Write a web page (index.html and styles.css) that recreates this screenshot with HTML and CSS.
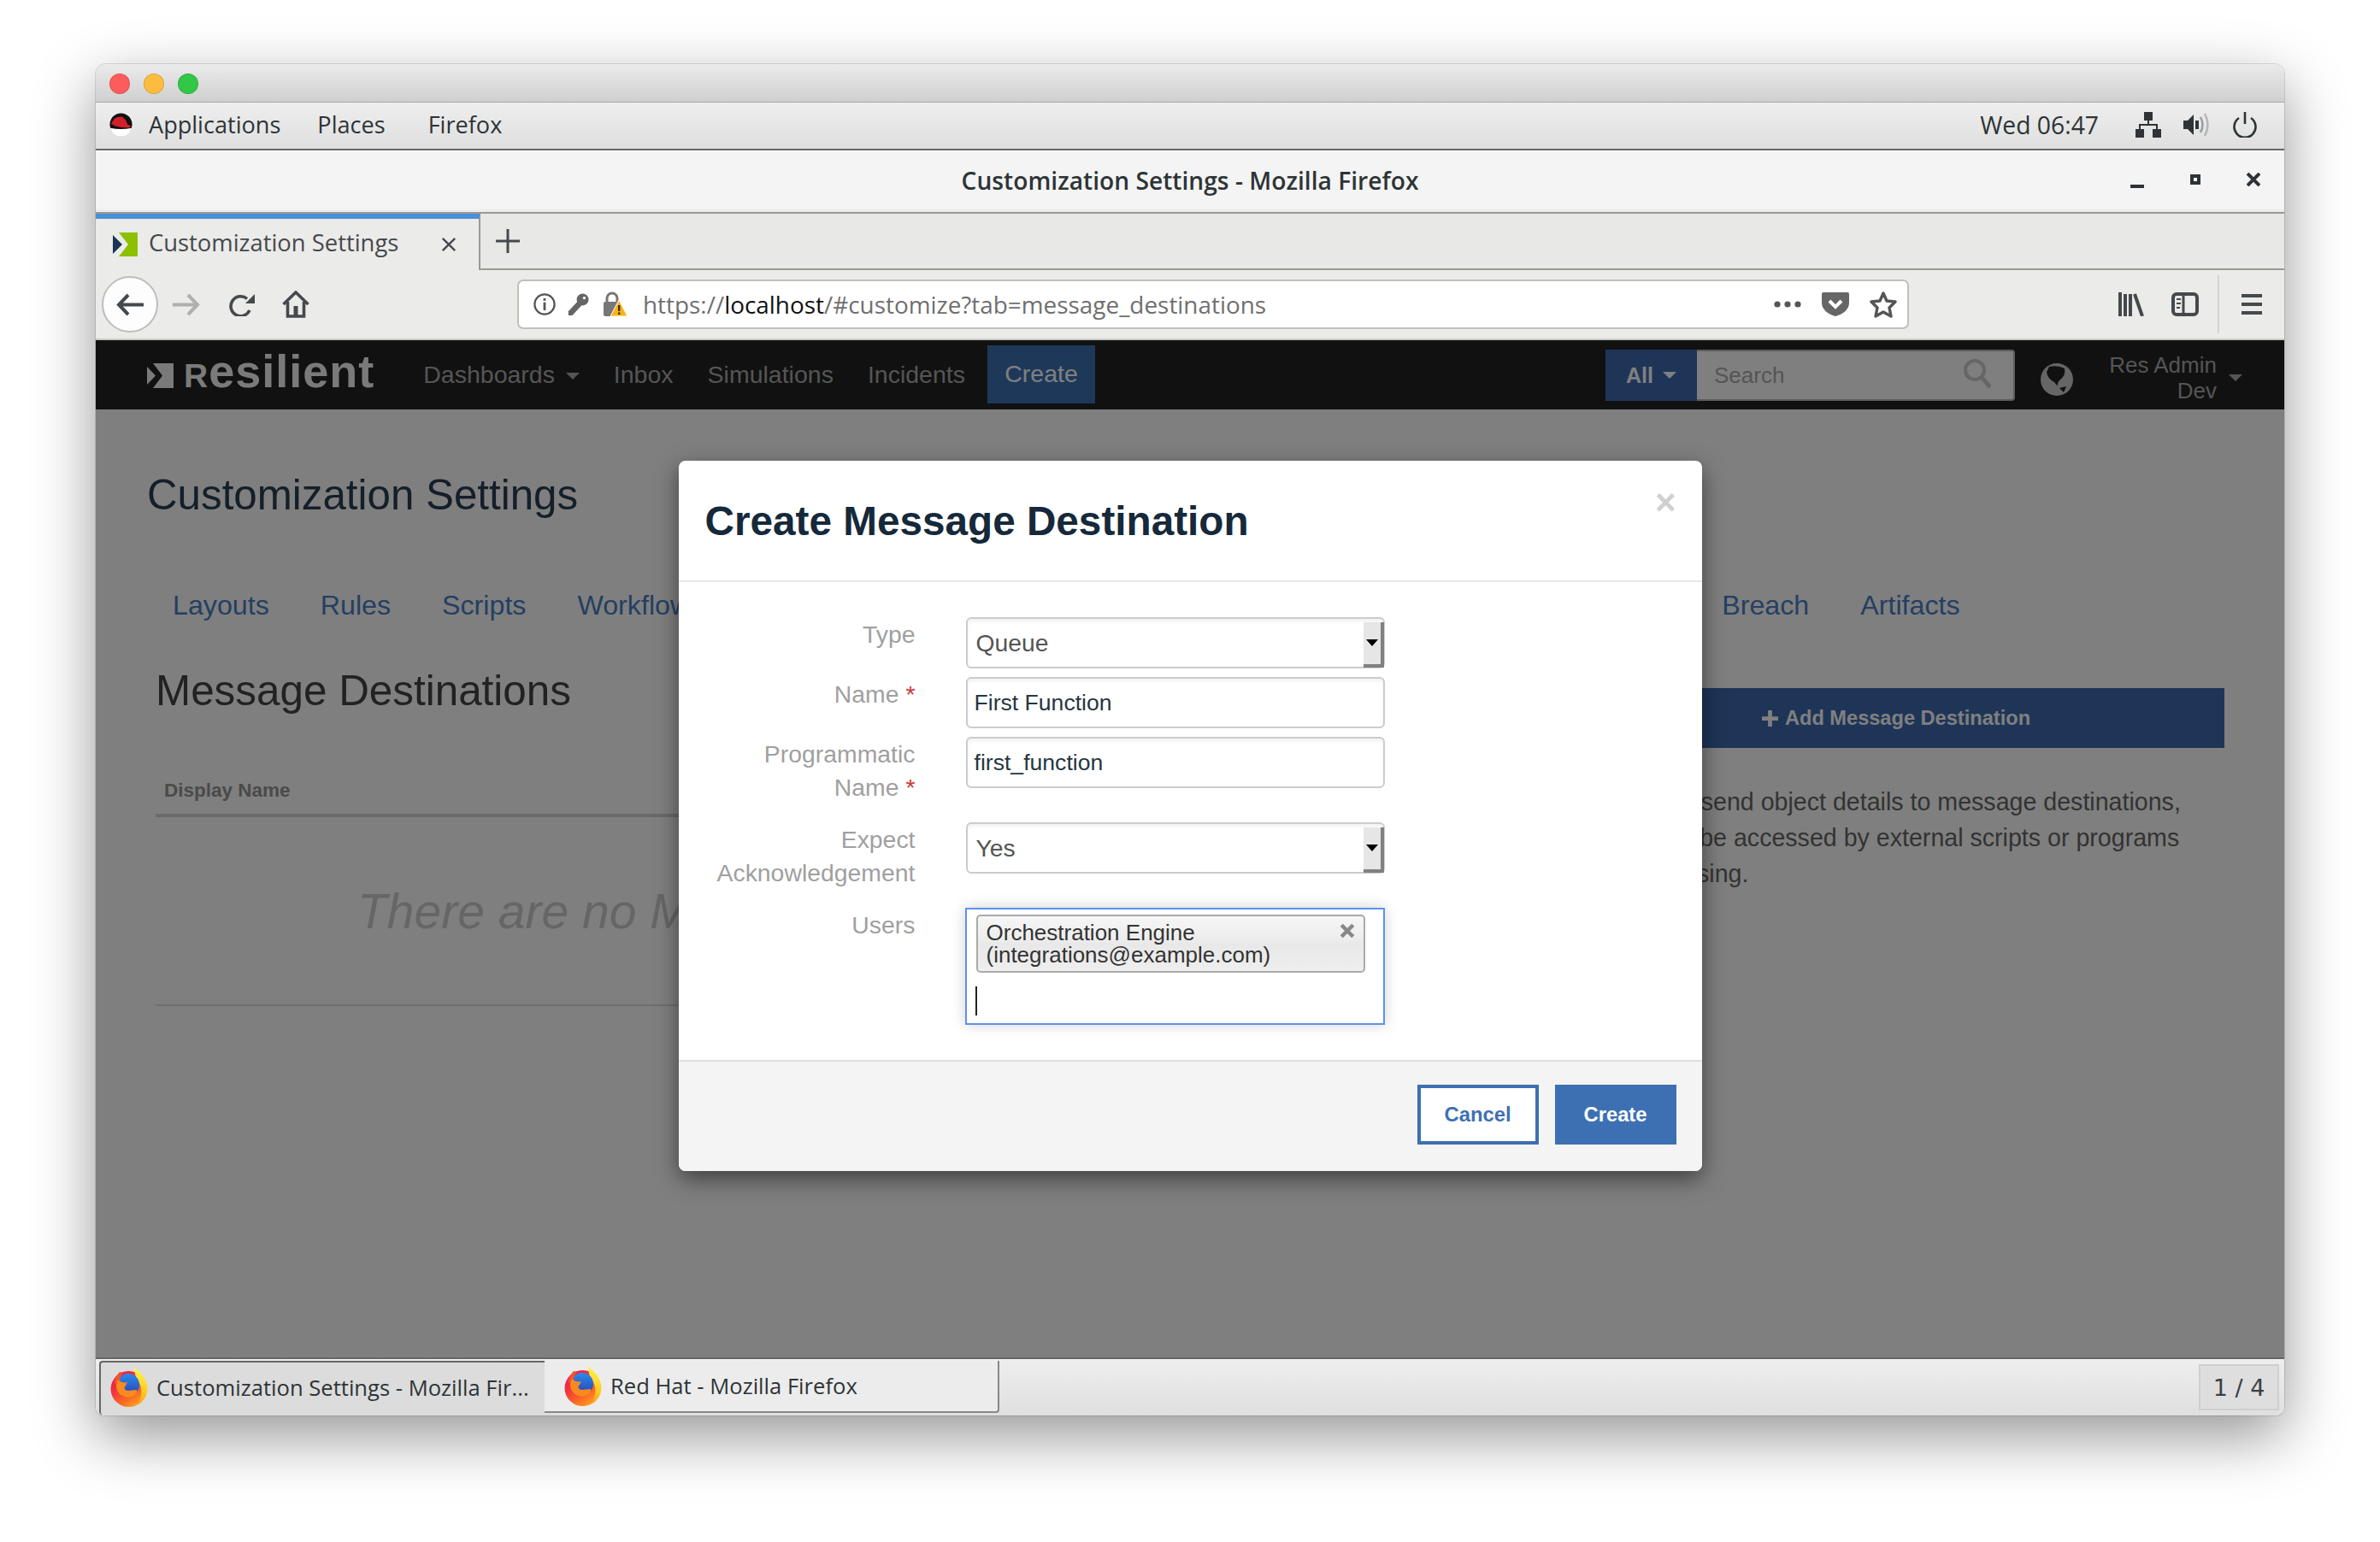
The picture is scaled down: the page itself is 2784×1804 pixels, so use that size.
FILE: index.html
```html
<!DOCTYPE html>
<html lang="en">
<head>
<meta charset="utf-8">
<title>Customization Settings</title>
<link rel="stylesheet" href="styles.css">
</head>
<body>
<div class="window">
  <div class="macbar">
    <span class="light red"></span><span class="light amber"></span><span class="light green"></span>
  </div>
  <div class="gnomebar">
    <svg class="redhat" viewBox="0 0 28 28"><circle cx="14" cy="14" r="13.5" fill="#111"/><path d="M1 18.5 A13.5 13.5 0 0 0 27 18.5 Q14 21 1 18.5 Z" fill="#fff"/><path d="M2 13 L6 7 Q11 4 16 5 L20 9 L22 14 L26 16 Q25 19 20 18 Q8 18 2 13 Z" fill="#d0202a"/></svg>
    <span class="gmenu first">Applications</span>
    <span class="gmenu places">Places</span>
    <span class="gmenu firefox">Firefox</span>
    <span class="clock">Wed 06:47</span>
    <svg class="tray net" viewBox="0 0 30 30"><rect x="10" y="0" width="10" height="10" fill="#2e3436"/><rect x="0" y="20" width="10" height="10" fill="#2e3436"/><rect x="20" y="20" width="10" height="10" fill="#2e3436"/><path d="M15 10V15M5 20V15H25V20" fill="none" stroke="#2e3436" stroke-width="2"/></svg>
    <svg class="tray vol" viewBox="0 0 30 28"><path d="M0 9H5L12 2V26L5 19H0Z" fill="#2e3436"/><rect x="14" y="9" width="4" height="10" fill="#2e3436"/><path d="M20 5Q25 14 20 23" fill="none" stroke="#9a9c9c" stroke-width="2.5"/><path d="M25 1Q32 14 25 27" fill="none" stroke="#b4b6b6" stroke-width="2.5"/></svg>
    <svg class="tray pow" viewBox="0 0 30 30"><path d="M8 7A12.5 12.5 0 1 0 22 7" fill="none" stroke="#2e3436" stroke-width="2.6"/><path d="M15 0V14" stroke="#2e3436" stroke-width="2.6"/></svg>
  </div>
  <div class="titlebar">
    <span class="wintitle">Customization Settings - Mozilla Firefox</span>
    <div class="wincontrols">
      <span class="wmin"></span>
      <span class="wmax"></span>
      <svg class="wclose" viewBox="0 0 16 16"><path d="M1 1L15 15M15 1L1 15" stroke="#2e3436" stroke-width="4"/></svg>
    </div>
  </div>
  <div class="tabbar">
    <div class="tab">
      <svg class="favicon" viewBox="0 0 29 28"><path d="M0 3L11 14L0 25Z" fill="#1c3553"/><path d="M7 0H29V28H7L18 14Z" fill="#8cc000"/></svg>
      <span class="tabtext">Customization Settings</span>
      <svg class="tabclose" viewBox="0 0 20 20"><path d="M2 2L18 18M18 2L2 18" stroke="#45494c" stroke-width="2.6"/></svg>
    </div>
    <svg class="newtab" viewBox="0 0 28 28"><path d="M14 0V28M0 14H28" stroke="#45494c" stroke-width="3"/></svg>
  </div>
  <div class="navbar">
    <span class="backbtn"><svg class="arrow" viewBox="0 0 32 27"><path d="M14 2L3 13.5L14 25M3 13.5H32" fill="none" stroke="#45494c" stroke-width="4"/></svg></span>
    <svg class="arrow fwd" viewBox="0 0 32 27"><path d="M18 2L29 13.5L18 25M29 13.5H0" fill="none" stroke="#b0b0b0" stroke-width="4"/></svg>
    <svg class="reload" viewBox="0 0 30 27"><path d="M21 6.5A11.5 11.5 0 1 0 24 20" fill="none" stroke="#45494c" stroke-width="3.6"/><path d="M30 1V12H19Z" fill="#45494c"/></svg>
    <svg class="home" viewBox="0 0 32 32"><path d="M1.5 16L16 2L30.5 16" fill="none" stroke="#45494c" stroke-width="3.6"/><path d="M6.5 13V30H25.5V13" fill="none" stroke="#45494c" stroke-width="3.6"/><rect x="13.5" y="18" width="5" height="12" fill="#45494c"/></svg>
    <div class="urlbar">
      <svg class="uicon info" viewBox="0 0 28 28"><circle cx="14" cy="14" r="12.5" fill="none" stroke="#555" stroke-width="2.4"/><rect x="12.5" y="6.5" width="3" height="3" fill="#555"/><rect x="12.5" y="11.5" width="3" height="10" fill="#555"/></svg>
      <svg class="uicon key" viewBox="0 0 28 28"><path d="M15 9L2 23V28H7L20 14Z" fill="#666"/><circle cx="20" cy="8" r="7.5" fill="#666"/><circle cx="22" cy="6" r="1.8" fill="#fff"/></svg>
      <svg class="uicon lock" viewBox="0 0 30 30"><path d="M6 12V8A6 6 0 0 1 18 8V12" fill="none" stroke="#777" stroke-width="3"/><rect x="2" y="12" width="20" height="17" rx="2" fill="#777"/><path d="M20 10L30 29H10Z" fill="#fbb216" stroke="#fff" stroke-width="1"/><rect x="19" y="16" width="2.4" height="7" fill="#333"/><rect x="19" y="24.5" width="2.4" height="2.4" fill="#333"/></svg>
      <span class="url">https://<b class="host">localhost</b>/#customize?tab=message_destinations</span>
      <svg class="dots" viewBox="0 0 32 8"><circle cx="4" cy="4" r="3.6" fill="#555"/><circle cx="16" cy="4" r="3.6" fill="#555"/><circle cx="28" cy="4" r="3.6" fill="#555"/></svg>
      <svg class="shield" viewBox="0 0 32 28"><path d="M2 0H30Q32 0 32 2V12Q32 23 16 28Q0 23 0 12V2Q0 0 2 0Z" fill="#666"/><path d="M9 10L16 17L23 10" fill="none" stroke="#fff" stroke-width="4"/></svg>
      <svg class="star" viewBox="0 0 32 32"><path d="M16 3L20 12L30 13L23 20L25 30L16 25L7 30L9 20L2 13L12 12Z" fill="none" stroke="#555" stroke-width="3.4" stroke-linejoin="round"/></svg>
    </div>
    <svg class="library" viewBox="0 0 30 28"><path d="M2 0V28M8 2V28M14 2V28M19 2L28 28" stroke="#45494c" stroke-width="4" fill="none"/></svg>
    <svg class="sidebar" viewBox="0 0 32 28"><rect x="2" y="2" width="28" height="24" rx="4" fill="none" stroke="#45494c" stroke-width="4"/><path d="M14 2V26" stroke="#45494c" stroke-width="3"/><path d="M6 8H11M6 13H11M6 18H10" stroke="#45494c" stroke-width="2"/></svg>
    <span class="navsep"></span>
    <svg class="hamburger" viewBox="0 0 24 24"><rect y="0" width="24" height="4" fill="#45494c"/><rect y="10" width="24" height="4" fill="#45494c"/><rect y="20" width="24" height="4" fill="#45494c"/></svg>
  </div>
  <div class="page">
    <div class="appnav">
      <svg class="logomark" viewBox="0 0 31 29"><path d="M0 4L10 14.5L0 25Z" fill="#f4f4f4"/><path d="M7 0H31V29H7L18 14.5Z" fill="#f4f4f4"/></svg>
      <span class="logotext"><span class="logocap">R</span>esilient</span>
      <span class="navitem dash">Dashboards <i class="caret"></i></span>
      <span class="navitem inbox">Inbox</span>
      <span class="navitem sims">Simulations</span>
      <span class="navitem incs">Incidents</span>
      <span class="navcreate">Create</span>
      <div class="searchgroup">
        <span class="allbtn">All <i class="caret white"></i></span>
        <span class="searchbox">Search
          <svg class="searchicon" viewBox="0 0 32 34"><circle cx="13" cy="13" r="11" fill="none" stroke="#ccc" stroke-width="4"/><path d="M21 21L31 33" stroke="#ccc" stroke-width="5"/></svg>
        </span>
      </div>
      <svg class="globe" viewBox="0 0 38 38"><circle cx="19" cy="19" r="19" fill="#ccc"/><path d="M10 4Q20 2 28 6Q30 14 22 20Q19 24 20 27L16 22Q8 18 7 10Z" fill="#222"/><path d="M22 29L30 27L27 34Z" fill="#222"/></svg>
      <span class="user">Res Admin<br>Dev</span>
      <i class="caret usercaret"></i>
    </div>
    <div class="content">
      <h1 class="pagetitle">Customization Settings</h1>
      <div class="tabs">
        <span class="tablink layouts">Layouts</span>
        <span class="tablink">Rules</span>
        <span class="tablink">Scripts</span>
        <span class="tablink">Workflows</span>
        <span class="tablink breach">Breach</span>
        <span class="tablink">Artifacts</span>
      </div>
      <div class="columns">
        <div class="maincol">
          <h2 class="sectiontitle">Message Destinations</h2>
          <div class="tablehead">Display Name</div>
          <div class="emptyrow">There are no Message Destinations</div>
        </div>
        <div class="sidecol">
          <div class="addbtn"><svg class="plus" viewBox="0 0 20 20"><path d="M10 0V20M0 10H20" stroke="#fff" stroke-width="5"/></svg>Add Message Destination</div>
          <p class="sidetext">Actions can send object details to message destinations,<br>so they can be accessed by external scripts or programs<br>after processing.</p>
        </div>
      </div>
    </div>
    <div class="backdrop">
      <div class="modal">
        <div class="modalhead">
          <h3 class="modaltitle">Create Message Destination</h3>
          <span class="modalclose">×</span>
        </div>
        <div class="modalbody">
          <div class="row">
            <span class="label">Type</span>
            <div class="select"><span>Queue</span><span class="selarrow"><i class="seltri"></i></span></div>
          </div>
          <div class="row">
            <span class="label">Name <em class="req">*</em></span>
            <div class="input">First Function</div>
          </div>
          <div class="row tall">
            <span class="label">Programmatic<br>Name <em class="req">*</em></span>
            <div class="input">first_function</div>
          </div>
          <div class="row mid">
            <span class="label">Expect<br>Acknowledgement</span>
            <div class="select"><span>Yes</span><span class="selarrow"><i class="seltri"></i></span></div>
          </div>
          <div class="row">
            <span class="label">Users</span>
            <div class="users">
              <div class="chip">
                <span>Orchestration Engine<br>(integrations@example.com)</span>
                <svg class="chipx" viewBox="0 0 16 16"><path d="M2 2L14 14M14 2L2 14" stroke="#888" stroke-width="4"/></svg>
              </div>
              <i class="cursor"></i>
            </div>
          </div>
        </div>
        <div class="modalfoot">
          <span class="btn cancel">Cancel</span>
          <span class="btn create">Create</span>
        </div>
      </div>
    </div>
  </div>
  <div class="taskbar">
    <div class="task active">
      <svg class="ffx" viewBox="0 0 44 46"><use href="#ffsym"/></svg>
      <span>Customization Settings - Mozilla Fir...</span>
    </div>
    <div class="task other">
      <svg class="ffx" viewBox="0 0 44 46"><use href="#ffsym"/></svg>
      <span>Red Hat - Mozilla Firefox</span>
    </div>
    <div class="pager">1 / 4</div>
  </div>
</div>
<svg class="defs" width="0" height="0">
  <defs>
    <linearGradient id="ffbody" x1="0" y1="0" x2="0.7" y2="1"><stop offset="0" stop-color="#e8175d"/><stop offset="0.4" stop-color="#f0303f"/><stop offset="0.75" stop-color="#fb6a24"/><stop offset="1" stop-color="#ffa01e"/></linearGradient>
    <linearGradient id="fftail" x1="0" y1="0" x2="0" y2="1"><stop offset="0" stop-color="#fff44f"/><stop offset="0.7" stop-color="#ffc61e"/><stop offset="1" stop-color="#ff9a1e"/></linearGradient>
    <linearGradient id="ffglobe" x1="0" y1="0" x2="0" y2="1"><stop offset="0" stop-color="#2a8ce8"/><stop offset="1" stop-color="#2d3fb8"/></linearGradient>
    <symbol id="ffsym" viewBox="0 0 44 46">
      <ellipse cx="21.5" cy="25" rx="21" ry="21" fill="url(#ffbody)"/>
      <path d="M28 0Q43 10 43.500 25Q43 38 31 44Q40 30 34 18Q28 10 28 0Z" fill="url(#fftail)"/>
      <circle cx="21" cy="20" r="13" fill="url(#ffglobe)"/>
      <path d="M11 5Q5 11 5 19L11 17Q11 10 15 6Z" fill="#f2542c"/>
      <path d="M9 14Q4 24 11 31Q19 37 27 33Q32 30 31 26L20 27Q14 25 18 21L20 17Q14 19 9 14Z" fill="#fa8a1e"/>
    </symbol>
  </defs>
</svg>
</body>
</html>
```
FILE: styles.css
```css
* { box-sizing: border-box; }
html, body { margin: 0; background: #fff; }
body { width: 2784px; height: 1804px; padding: 75px 112px 0; overflow: hidden; font-family: "Liberation Sans", Arial, sans-serif; }
.defs { position: absolute; }
svg { display: block; flex: none; }

.window {
  width: 2560px; height: 1581px; display: flex; flex-direction: column;
  border-radius: 12px 12px 10px 10px; overflow: hidden;
  box-shadow: 0 0 0 1px rgba(0,0,0,.12), 0 24px 70px rgba(0,0,0,.42);
}

.macbar { height: 45px; flex: none; display: flex; align-items: center; gap: 16px; padding: 1px 0 0 16px; background: linear-gradient(#ebebeb, #cfcfcf); border-bottom: 1px solid #a8a8a8; }
.light { width: 24px; height: 24px; border-radius: 50%; border: 1px solid rgba(0,0,0,.12); }
.red { background: #fc5d5c; }
.amber { background: #fdbc40; }
.green { background: #33c748; }

.gnomebar { height: 56px; flex: none; display: flex; align-items: center; padding: 0 0 3px 16px; background: linear-gradient(#eeeeee, #dfdfdf); border-bottom: 2px solid #666; font-family: "Open Sans", sans-serif; font-size: 27.1px; color: #2e3436; }
.redhat { width: 27px; height: 27px; }
.gmenu.first { margin-left: 19px; }
.gmenu.places { margin-left: 43px; }
.gmenu.firefox { margin-left: 50px; }
.clock { margin-left: auto; font-size: 28.3px; }
.tray { width: 30px; height: 30px; }
.net { margin-left: 43px; }
.vol { margin-left: 26px; }
.pow { margin: 0 31px 0 27px; }

.titlebar { height: 74px; flex: none; position: relative; display: flex; align-items: center; justify-content: center; background: #f4f4f4; border-top: 1px solid #fff; border-bottom: 2px solid #9a9a92; box-shadow: inset 0 -3px 0 #ececec; font-family: "Open Sans", sans-serif; font-weight: 600; font-size: 28.2px; color: #2e3436; padding-bottom: 4px; }
.wincontrols { position: absolute; right: 28px; top: 0; bottom: 0; display: flex; align-items: center; }
.wmin { width: 16px; height: 4px; background: #2e3436; margin-top: 11px; }
.wmax { width: 12px; height: 12px; border: 4px solid #2e3436; margin: -6px 0 0 54px; }
.wclose { width: 16px; height: 16px; margin: -6px 0 0 54px; }

.tabbar { height: 66px; flex: none; display: flex; align-items: stretch; background: #e8e8e6; border-bottom: 2px solid #9a9a92; }
.tab { width: 450px; margin-bottom: -2px; display: flex; align-items: center; padding: 0 0 0 20px; background: #ebebe9; border-top: 6px solid #4a90d9; border-right: 2px solid #9a9a92; font-family: "Open Sans", sans-serif; font-size: 27.4px; color: #45494c; position: relative; }
.favicon { width: 29px; height: 28px; margin-top: -1px; }
.tabtext { margin: -5px 0 0 13px; }
.tabclose { width: 18px; height: 18px; margin-left: auto; margin-right: 26px; }
.newtab { width: 28px; height: 28px; align-self: center; margin-left: 18px; }

.navbar { height: 82px; flex: none; display: flex; align-items: center; padding-left: 7px; background: #ebebe9; border-bottom: 2px solid #c8c8c4; }
.backbtn { width: 66px; height: 66px; border-radius: 50%; background: #fdfdfd; border: 2px solid #bdbdbd; display: flex; align-items: center; justify-content: center; }
.arrow { width: 32px; height: 27px; }
.arrow.fwd { margin-left: 17px; }
.reload { width: 30px; height: 27px; margin-left: 34px; }
.home { width: 32px; height: 32px; margin-left: 32px; }
.urlbar { width: 1628px; height: 58px; margin-left: 243px; display: flex; align-items: center; padding: 0 12px 0 17px; background: #fff; border: 2px solid #c0c0bc; border-radius: 7px; }
.uicon { width: 26px; height: 26px; }
.key { margin-left: 13px; }
.lock { margin-left: 15px; width: 30px; height: 30px; }
.url { margin-left: 18px; font-family: "Open Sans", sans-serif; font-size: 27.9px; color: #6f6f6f; white-space: nowrap; }
.host { font-weight: 400; color: #111; }
.dots { width: 32px; height: 8px; margin-left: auto; }
.shield { width: 32px; height: 28px; margin-left: 24px; }
.star { width: 32px; height: 32px; margin-left: 24px; }
.library { width: 30px; height: 28px; margin-left: 245px; }
.sidebar { width: 32px; height: 28px; margin-left: 32px; }
.navsep { width: 2px; height: 68px; margin-left: 22px; background: #d4d4d0; }
.hamburger { width: 24px; height: 24px; margin-left: 26px; }

.page { flex: 1; position: relative; background: #fff; overflow: hidden; }

.appnav { height: 81px; display: flex; align-items: center; padding-left: 60px; background: #222; color: #aaa; font-size: 28.5px; }
.logomark { width: 31px; height: 29px; margin-top: 1px; }
.logotext { margin: 0 0 10px 12px; font-size: 54px; font-weight: 700; color: #f4f4f4; letter-spacing: 1px; line-height: 1; }
.logocap { font-size: 39px; }
.navitem { white-space: nowrap; }
.dash { margin-left: 57px; }
.inbox { margin-left: 40px; }
.sims { margin-left: 40px; }
.incs { margin-left: 40px; }
.caret { display: inline-block; width: 0; height: 0; border: 8px solid transparent; border-top-color: #aaa; border-bottom: 0; vertical-align: middle; margin-left: 5px; }
.caret.white { border-top-color: #fff; }
.navcreate { margin-left: 26px; width: 126px; height: 68px; margin-top: -2px; display: flex; align-items: center; justify-content: center; background: #3d70b2; color: #fff; }
.searchgroup { display: flex; height: 60px; margin-left: 597px; margin-top: 1px; }
.allbtn { width: 107px; display: flex; align-items: center; justify-content: center; gap: 6px; background: #3d6ab0; color: #fff; font-weight: 700; font-size: 25px; }
.searchbox { width: 372px; display: flex; align-items: center; justify-content: space-between; padding: 0 26px 0 20px; background: #fff; border: 2px solid #bbb; border-left: 0; border-radius: 0 4px 4px 0; color: #aaa; font-size: 26px; }
.searchicon { width: 32px; height: 34px; margin-top: -4px; }
.globe { width: 38px; height: 38px; margin: 10px 0 0 30px; }
.user { width: 168px; text-align: right; font-size: 26px; line-height: 30px; margin-top: 6px; }
.usercaret { margin: 6px 0 0 14px; }

.content { padding: 0 0 0 60px; }
.pagetitle { margin: 0; width: fit-content; height: 139px; padding-top: 72px; font-size: 49.3px; line-height: 56px; font-weight: 400; color: #2a3f52; }
.tabs { display: flex; height: 122px; padding: 70px 0 0 30px; font-size: 32.2px; line-height: 40px; color: #4a7fc5; gap: 60px; }
.tablink { white-space: nowrap; }
.breach { margin-left: 1131px; }
.columns { display: flex; padding-left: 10px; }
.maincol { width: 1652px; }
.sectiontitle { margin: 0; width: fit-content; height: 154px; padding-top: 40px; font-size: 49.4px; line-height: 56px; font-weight: 400; color: #444; }
.tablehead { height: 62px; padding: 18px 0 0 10px; font-size: 22.5px; line-height: 26px; font-weight: 700; color: #959595; border-bottom: 4px solid #d5d5d5; }
.emptyrow { height: 221px; padding: 77px 0 0 236px; font-size: 57px; line-height: 66px; font-style: italic; color: #ccc; border-bottom: 2px solid #dedede; white-space: nowrap; }
.sidecol { width: 768px; }
.addbtn { height: 70px; margin-top: 65px; display: flex; align-items: center; justify-content: center; gap: 8px; background: #3d6ab0; color: #fff; font-weight: 700; font-size: 23.6px; }
.plus { width: 19px; height: 19px; }
.sidetext { margin: 42px 0 0; font-size: 28.6px; line-height: 42px; color: #666; white-space: nowrap; }

.backdrop { position: absolute; inset: 0; background: rgba(0,0,0,.5); padding-top: 141px; }
.modal { width: 1197px; height: 831px; margin: 0 auto; background: #fff; border-radius: 8px; display: flex; flex-direction: column; box-shadow: 0 9px 27px rgba(0,0,0,.5); position: relative; }
.modalhead { height: 142px; flex: none; position: relative; padding: 0 0 0 31px; border-bottom: 2px solid #e8e8e8; }
.modaltitle { margin: 0; width: fit-content; padding-top: 43px; font-size: 47.7px; line-height: 56px; font-weight: 700; color: #16293a; }
.modalclose { position: absolute; right: 30px; top: 21px; font-size: 42px; line-height: 56px; font-weight: 700; color: #d0d0d0; }
.modalbody { height: 559px; flex: none; padding-top: 41px; }
.row { display: flex; margin-bottom: 10px; }
.row.tall { min-height: 90px; }
.row.mid { min-height: 90px; }
.label { width: 277px; flex: none; padding-top: 1px; text-align: right; font-size: 28.4px; line-height: 39px; color: #a0a0a0; white-space: nowrap; }
.req { font-style: normal; color: #c93b3b; }
.select, .input { width: 490px; height: 60px; margin-left: 59px; position: relative; display: flex; align-items: center; background: #fff; border: 2px solid #ccc; border-radius: 6px; box-shadow: inset 0 3px 4px rgba(0,0,0,.06); }
.select { padding-left: 10px; font-size: 28.3px; color: #555; }
.input { padding-left: 8px; font-size: 26.6px; color: #26363f; }
.selarrow { position: absolute; right: -1px; top: 4px; bottom: -1px; width: 24px; display: flex; align-items: center; justify-content: center; padding: 0 0 2px 0; background: #e6e6e6; border-right: 4px solid #808080; border-bottom: 4px solid #808080; }
.seltri { width: 0; height: 0; border: 7px solid transparent; border-top: 8px solid #000; border-bottom: 0; }
.users { width: 491px; height: 137px; margin-left: 58px; padding: 6px 0 0 11px; border: 2px solid #5b93f0; background: #fff; box-shadow: 0 0 16px rgba(0,0,0,.18); }
.chip { width: 455px; height: 68px; display: flex; justify-content: space-between; padding: 6px 10px 0 10px; background: linear-gradient(#f6f6f6, #ececec 45%, #e8e8e8 50%, #eeeeee); border: 2px solid #aaa; border-radius: 5px; font-size: 26px; line-height: 26px; color: #333; white-space: nowrap; }
.chipx { width: 18px; height: 18px; margin-top: 2px; }
.cursor { display: block; width: 2px; height: 34px; margin: 16px 0 0 -1px; background: #222; }
.modalfoot { flex: 1; display: flex; justify-content: flex-end; gap: 19px; padding: 27px 30px 0 0; background: #f4f4f4; border-top: 2px solid #e0e0e0; border-radius: 0 0 8px 8px; }
.btn { width: 142px; height: 70px; display: flex; align-items: center; justify-content: center; font-size: 23.8px; font-weight: 700; }
.cancel { background: #fff; color: #3d70b2; border: 4px solid #3d70b2; }
.create { background: #3d70b2; color: #fff; }

.taskbar { height: 68px; flex: none; display: flex; align-items: flex-start; padding: 2px 6px 0 4px; background: linear-gradient(#eeeeee, #dfdfdf); border-top: 2px solid #666; font-family: "Open Sans", sans-serif; font-size: 25.6px; color: #2e3436; }
.task { display: flex; align-items: center; white-space: nowrap; }
.active { width: 521px; height: 63px; padding: 0 0 3px 11px; background: #dcdcdc; border-left: 2px solid #666; border-top: 2px solid #666; border-radius: 4px 0 0 4px; }
.other { width: 532px; height: 61px; padding-left: 23px; background: #ececec; border-right: 2px solid #888; border-bottom: 2px solid #888; border-radius: 0 0 4px 0; }
.ffx { width: 44px; height: 46px; margin-right: 10px; }
.pager { width: 94px; height: 54px; margin: 4px 0 0 auto; display: flex; align-items: center; justify-content: center; background: #dedede; border: 2px solid #cfcfcf; font-family: "DejaVu Sans", sans-serif; font-size: 27px; color: #3a4044; }
```
